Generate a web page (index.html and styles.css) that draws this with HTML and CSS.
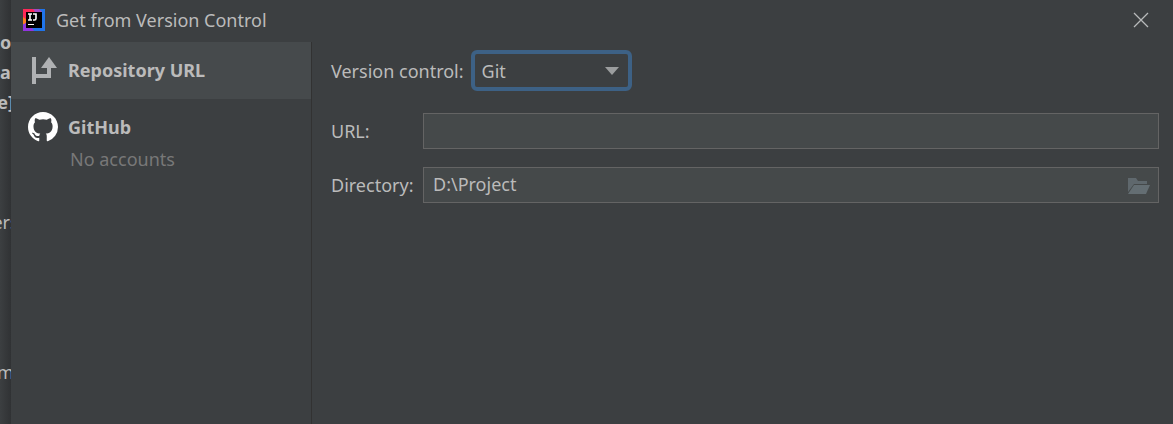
FILE: index.html
```html
<!DOCTYPE html>
<html lang="en">
<head>
  <meta charset="UTF-8" />
  <meta name="viewport" content="width=device-width, initial-scale=1.0" />
  <title>Get from Version Control</title>
  <link rel="stylesheet" href="styles.css">
</head>
<body>
  <div class="backdrop" aria-hidden="true">
    <b>o</b>
    <b>a</b>
    <b>e]</b>
    <span class="gap"></span>
    <span>ers</span>
    <span class="gap wide"></span>
    <span>m</span>
  </div>

  <div class="dialog" role="dialog" aria-labelledby="dialog-title">
    <header class="titlebar">
      <svg class="app-icon" viewBox="0 0 22 22" aria-hidden="true">
        <rect width="22" height="22" fill="#2074ea" />
        <path d="M0 0h11l6 3-6 9-11 3z" fill="#fe2857" />
        <path d="M10 0h6l3 3h-7z" fill="#a44ac0" />
        <path d="M0 8l4 3v7l-4-3z" fill="#fc801d" />
        <path d="M0 16l5-4 6 10H0z" fill="#9135e0" />
        <rect x="3" y="3" width="16" height="16" fill="#000" />
        <path d="M5 5h4M7 5v6M5 11h4M10 5h3v4.500q0 1.500-1.500 1.500H10" fill="none" stroke="#fff" stroke-width="1.600" />
        <rect x="5" y="15" width="6" height="1" fill="#fff" />
      </svg>
      <h1 id="dialog-title">Get from Version Control</h1>
      <button class="close" aria-label="Close">
        <svg viewBox="0 0 16 16" aria-hidden="true">
          <path d="M1 1l14 14M15 1L1 15" fill="none" stroke="#b8babb" stroke-width="1.300" />
        </svg>
      </button>
    </header>

    <div class="content">
      <nav class="sidebar">
        <button class="source selected">
          <svg viewBox="0 0 30 30" aria-hidden="true">
            <path d="M4 2h4v27H4zM8 19h11v-7h4v11H8z" fill="#afb1b3" />
            <path d="M21 2l8 11H13z" fill="#afb1b3" />
          </svg>
          <span class="name">Repository URL</span>
        </button>
        <button class="source">
          <svg viewBox="0 0 16 16" aria-hidden="true">
            <path fill="#fff" d="M8 0C3.580 0 0 3.580 0 8c0 3.540 2.290 6.530 5.470 7.590.4.070.55-.17.55-.38 0-.19-.010-.82-.010-1.490-2.010.37-2.530-.49-2.690-.94-.090-.23-.48-.94-.82-1.130-.28-.15-.68-.52-.010-.53.63-.010 1.080.58 1.230.82.72 1.210 1.870.87 2.330.66.070-.52.28-.87.510-1.070-1.780-.2-3.640-.89-3.640-3.950 0-.87.310-1.590.82-2.150-.080-.2-.36-1.020.080-2.120 0 0 .67-.21 2.200.82.64-.18 1.320-.27 2-.27s1.360.090 2 .27c1.530-1.040 2.200-.82 2.200-.82.44 1.100.16 1.920.080 2.120.51.56.82 1.270.82 2.150 0 3.070-1.870 3.750-3.650 3.950.29.25.54.73.54 1.480 0 1.070-.010 1.930-.010 2.200 0 .21.15.46.55.38A8.010 8.010 0 0 0 16 8c0-4.420-3.580-8-8-8z" />
          </svg>
          <span class="name">GitHub</span>
          <span class="note">No accounts</span>
        </button>
      </nav>

      <main class="form">
        <div class="vcs-row">
          <label for="vcs">Version control:</label>
          <div class="select-box">
            <select id="vcs">
              <option>Git</option>
              <option>Mercurial</option>
              <option>Subversion</option>
            </select>
            <svg class="arrow" viewBox="0 0 14 8" aria-hidden="true">
              <path d="M0 0h14L7 8z" fill="#9b9d9e" />
            </svg>
          </div>
        </div>

        <div class="fields">
          <label for="url">URL:</label>
          <input type="text" id="url" />

          <label for="directory">Directory:</label>
          <div class="directory-box">
            <input type="text" id="directory" value="D:\Project" />
            <button class="browse" aria-label="Browse">
              <svg viewBox="0 0 24 18" aria-hidden="true">
                <path d="M1 1h8l2 3h9v3H7L1 15z" fill="#5f686d" />
                <path d="M7 8h16l-4 9H1z" fill="#646e73" />
              </svg>
            </button>
          </div>
        </div>
      </main>
    </div>
  </div>
</body>
</html>
```
FILE: styles.css
```css
* {
  box-sizing: border-box;
}
body {
  margin: 0;
  min-height: 100vh;
  display: flex;
  background-color: #3c3f41;
  color: #bbbbbb;
  font-family: "Noto Sans", "Open Sans", sans-serif;
  font-size: 18px;
  line-height: 24px;
}
button, input, select {
  font: inherit;
  color: inherit;
}
button {
  border: none;
  background: none;
  padding: 0;
}
svg {
  display: block;
}

/* window behind the dialog */
.backdrop {
  width: 11px;
  flex: none;
  display: flex;
  flex-direction: column;
  align-items: center;
  overflow: hidden;
  padding-top: 27px;
  line-height: 30px;
  background: linear-gradient(to right, #3c3f41, #303234);
}
.gap {
  height: 90px;
}
.gap.wide {
  height: 120px;
}

.dialog {
  flex: 1;
  display: flex;
  flex-direction: column;
}
.titlebar {
  display: flex;
  align-items: center;
  height: 42px;
  padding: 0 24px 2px 12px;
}
.app-icon {
  width: 22px;
  height: 22px;
  margin-right: 11px;
}
h1 {
  flex: 1;
  margin: 0;
  font-size: 18px;
  font-weight: normal;
}
.close svg {
  width: 16px;
  height: 16px;
}

.content {
  flex: 1;
  display: flex;
}
.sidebar {
  width: 301px;
  border-right: 1px solid #323232;
}
.source {
  display: grid;
  grid-template-columns: 30px 1fr;
  column-gap: 10px;
  row-gap: 5px;
  align-items: center;
  width: 100%;
  padding: 13px 17px 14px;
  text-align: left;
}
.source.selected {
  background-color: #464a4c;
}
.source svg {
  width: 30px;
  height: 30px;
}
.name {
  font-weight: bold;
}
.note {
  grid-column: 2;
  padding-left: 2px;
  color: #787878;
}

.form {
  flex: 1;
  padding: 8px 14px 8px 19px;
}
.vcs-row {
  display: flex;
  align-items: center;
  gap: 7px;
  margin-bottom: 22px;
}
.select-box {
  position: relative;
}
select {
  appearance: none;
  display: block;
  width: 161px;
  height: 41px;
  padding: 1px 7px 0;
  border: 4px solid #3d6185;
  border-radius: 6px;
  background-color: #3c3f41;
  outline: none;
}
.arrow {
  position: absolute;
  top: 17px;
  right: 13px;
  width: 14px;
  height: 8px;
  pointer-events: none;
}
.fields {
  display: grid;
  grid-template-columns: 84px 1fr;
  column-gap: 8px;
  row-gap: 18px;
  align-items: center;
}
input {
  display: block;
  width: 100%;
  height: 36px;
  padding: 0 9px 2px;
  border: 1px solid #646464;
  border-radius: 0;
  background-color: #45494a;
  outline: none;
}
.directory-box {
  position: relative;
}
.browse {
  position: absolute;
  top: 10px;
  right: 8px;
}
.browse svg {
  width: 24px;
  height: 18px;
}
```
